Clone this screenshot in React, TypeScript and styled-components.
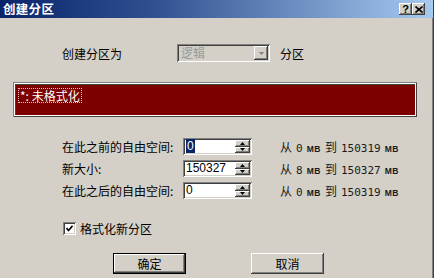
import styled, { createGlobalStyle } from "styled-components";

const GlobalStyle = createGlobalStyle`
  html, body {
    margin: 0;
    padding: 0;
    background: #ffffff;
  }
  body {
    font-family: "Noto Sans CJK SC", "Liberation Sans", sans-serif;
    font-size: 12px;
    color: #000;
  }
`;

const raised = `
  background: #d4d0c8;
  box-shadow: inset -1px -1px #404040, inset 1px 1px #ffffff, inset -2px -2px #808080, inset 2px 2px #d4d0c8;
`;

const sunken = `
  box-shadow: inset 1px 1px #808080, inset -1px -1px #ffffff, inset 2px 2px #404040, inset -2px -2px #d4d0c8;
`;

const Window = styled.div`
  width: 434px;
  height: 278px;
  box-sizing: border-box;
  background: #d4d0c8;
  border-right: 1px solid #404040;
  box-shadow: inset -1px 0 #808080;
  display: flex;
  flex-direction: column;
  overflow: hidden;
`;

const TitleBar = styled.div`
  height: 18px;
  flex: none;
  display: flex;
  align-items: center;
  justify-content: space-between;
  padding: 0 8px 0 3px;
  background: linear-gradient(to right, #0a246a 0%, #2f4f8f 35%, #a6caf0 100%);
`;

const Title = styled.span`
  color: #fff;
  font-weight: bold;
  font-size: 12.5px;
  letter-spacing: 0.3px;
  line-height: 18px;
`;

const TitleButtons = styled.div`
  display: flex;
`;

const CaptionButton = styled.div`
  ${raised}
  width: 13px;
  height: 12px;
  display: flex;
  align-items: center;
  justify-content: center;
  font-family: "Liberation Sans", sans-serif;
  font-weight: bold;
  font-size: 11px;
  line-height: 1;
`;

const Body = styled.div`
  display: flex;
  flex-direction: column;
`;

const TypeRow = styled.div`
  margin-top: 26px;
  padding-left: 62px;
  height: 18px;
  display: flex;
  align-items: center;
`;

const TypeLabel = styled.span`
  width: 115px;
`;

const Select = styled.div`
  ${sunken}
  width: 93px;
  height: 18px;
  box-sizing: border-box;
  padding: 2px;
  display: flex;
  align-items: center;
  background: #d4d0c8;
`;

const SelectText = styled.span`
  flex: 1;
  padding-left: 2px;
  color: #9a9a9a;
  line-height: 14px;
`;

const ArrowButton = styled.div`
  ${raised}
  width: 14px;
  height: 14px;
  display: flex;
  align-items: center;
  justify-content: center;
`;

const TypeSuffix = styled.span`
  margin-left: 10px;
`;

const ListBox = styled.div`
  margin: 20px 0 0 13px;
  width: 404px;
  height: 35px;
  box-sizing: border-box;
  background: #7c0000;
  box-shadow: inset 1px 1px #808080, inset -1px -1px #404040, inset 2px 2px #ffffff, inset -2px -2px #ffffff, inset 3px 3px #404040;
  padding: 5px;
`;

const ListItem = styled.span`
  display: inline-block;
  color: #fff;
  outline: 1px dotted #f0c0c0;
  outline-offset: -1px;
  padding: 0 2px;
  line-height: 15px;
`;

const Fields = styled.div`
  margin: 21px 0 0 62px;
  display: grid;
  grid-template-columns: 121px 69px auto;
  grid-auto-rows: 17px;
  row-gap: 5px;
  align-items: center;
`;

const FieldLabel = styled.span`
  line-height: 17px;
`;

const SpinBox = styled.div`
  ${sunken}
  background: #fff;
  height: 17px;
  box-sizing: border-box;
  padding: 2px;
  display: flex;
  align-items: center;
`;

const SpinValue = styled.span`
  flex: 1;
  padding-left: 1px;
  font-family: "Liberation Sans", sans-serif;
  font-size: 12px;
  line-height: 13px;
`;

const Selected = styled.span`
  background: #0a246a;
  color: #fff;
  padding: 0 1px;
`;

const SpinButtons = styled.div`
  width: 15px;
  height: 13px;
  display: flex;
  flex-direction: column;
`;

const SpinButton = styled.div`
  ${raised}
  flex: 1;
  display: flex;
  align-items: center;
  justify-content: center;
`;

const Range = styled.span`
  margin-left: 28px;
  display: flex;
  align-items: baseline;
  gap: 4px;
  font-family: "DejaVu Sans Mono", "Liberation Mono", monospace;
  font-size: 11px;
  white-space: nowrap;
  color: #1a1a1a;
`;

const RangeCjk = styled.span`
  font-family: "Noto Sans CJK SC", sans-serif;
  font-size: 12px;
`;

const Unit = styled.span`
  font-family: "Liberation Sans", sans-serif;
  font-size: 8.5px;
  font-weight: bold;
  letter-spacing: 0.5px;
`;

const CheckRow = styled.label`
  margin: 23px 0 0 63px;
  display: flex;
  align-items: center;
  gap: 4px;
  height: 13px;
`;

const CheckBox = styled.span`
  ${sunken}
  width: 13px;
  height: 13px;
  box-sizing: border-box;
  background: #fff;
  display: flex;
  align-items: center;
  justify-content: center;
`;

const ButtonRow = styled.div`
  margin: 18px 0 0 113px;
  display: flex;
  gap: 65px;
`;

const PushButton = styled.button<{ $default?: boolean }>`
  ${raised}
  width: 73px;
  height: 21px;
  border: ${({ $default }) => ($default ? "1px solid #000" : "none")};
  padding: 0;
  font-family: "Noto Sans CJK SC", sans-serif;
  font-size: 12px;
  color: #000;
`;

const Tri = ({ up, color = "#000" }: { up?: boolean; color?: string }) => (
  <svg width="5" height="3" viewBox="0 0 5 3">
    <path d={up ? "M2.5 0 L5 3 L0 3 Z" : "M0 0 L5 0 L2.5 3 Z"} fill={color} />
  </svg>
);

const ranges = [
  { label: "在此之前的自由空间:", value: "0", selected: true, min: "0", max: "150319" },
  { label: "新大小:", value: "150327", selected: false, min: "8", max: "150327" },
  { label: "在此之后的自由空间:", value: "0", selected: false, min: "0", max: "150319" },
];

export default function App() {
  return (
    <>
      <GlobalStyle />
      <Window>
        <TitleBar>
          <Title>创建分区</Title>
          <TitleButtons>
            <CaptionButton>?</CaptionButton>
            <CaptionButton>
              <svg width="8" height="7" viewBox="0 0 8 7">
                <path d="M0.5 0.5 L7.5 6.5 M7.5 0.5 L0.5 6.5" stroke="#000" strokeWidth="1.6" />
              </svg>
            </CaptionButton>
          </TitleButtons>
        </TitleBar>
        <Body>
          <TypeRow>
            <TypeLabel>创建分区为</TypeLabel>
            <Select>
              <SelectText>逻辑</SelectText>
              <ArrowButton>
                <Tri color="#808080" />
              </ArrowButton>
            </Select>
            <TypeSuffix>分区</TypeSuffix>
          </TypeRow>

          <ListBox>
            <ListItem>*:&nbsp;未格式化</ListItem>
          </ListBox>

          <Fields>
            {ranges.map((r) => [
              <FieldLabel key={r.label + "l"}>{r.label}</FieldLabel>,
              <SpinBox key={r.label + "s"}>
                <SpinValue>{r.selected ? <Selected>{r.value}</Selected> : r.value}</SpinValue>
                <SpinButtons>
                  <SpinButton>
                    <Tri up />
                  </SpinButton>
                  <SpinButton>
                    <Tri />
                  </SpinButton>
                </SpinButtons>
              </SpinBox>,
              <Range key={r.label + "r"}>
                <RangeCjk>从</RangeCjk>
                <span>{r.min}</span>
                <Unit>MB</Unit>
                <RangeCjk>到</RangeCjk>
                <span>{r.max}</span>
                <Unit>MB</Unit>
              </Range>,
            ])}
          </Fields>

          <CheckRow>
            <CheckBox>
              <svg width="7" height="7" viewBox="0 0 7 7">
                <path d="M0.5 3 L2.5 5.5 L6.5 0.8" stroke="#000" strokeWidth="1.6" fill="none" />
              </svg>
            </CheckBox>
            格式化新分区
          </CheckRow>

          <ButtonRow>
            <PushButton $default>确定</PushButton>
            <PushButton>取消</PushButton>
          </ButtonRow>
        </Body>
      </Window>
    </>
  );
}
